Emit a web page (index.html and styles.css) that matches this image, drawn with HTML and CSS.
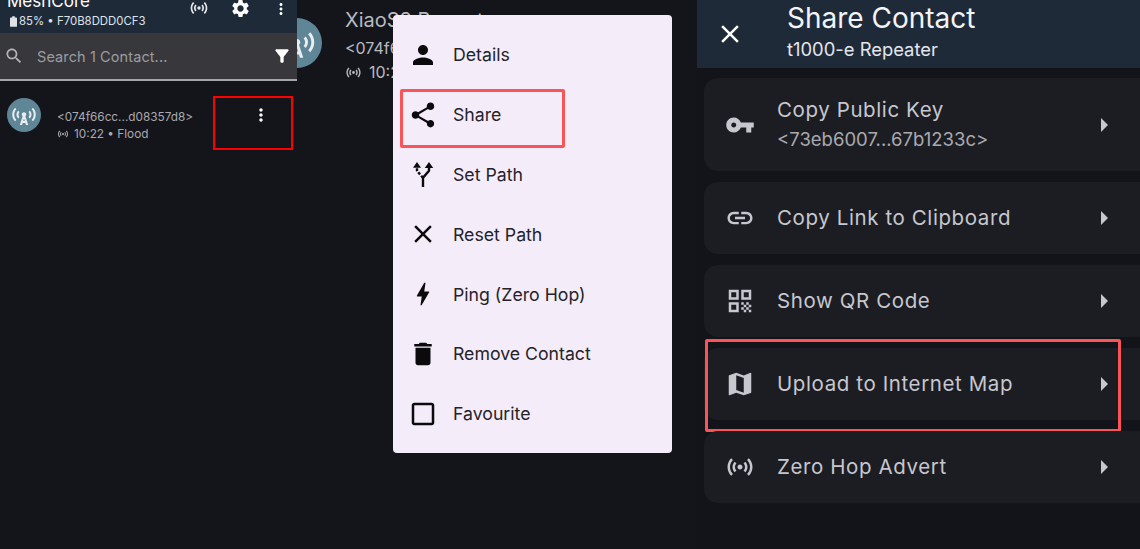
FILE: index.html
```html
<!DOCTYPE html>
<html lang="en">
<head>
  <meta charset="UTF-8" />
  <title>MeshCore Share Contact</title>
  <link rel="stylesheet" href="styles.css">
</head>
<body>
  <svg class="defs" width="0" height="0">
    <symbol id="i-advert" viewBox="0 0 24 24"><path d="M7.76 16.24C6.67 15.16 6 13.66 6 12s.67-3.16 1.76-4.24l1.42 1.42C8.45 9.9 8 10.9 8 12s.45 2.1 1.17 2.83l-1.41 1.41zm8.48 0C17.33 15.16 18 13.66 18 12s-.67-3.16-1.76-4.24l-1.42 1.42C15.55 9.9 16 10.9 16 12s-.45 2.1-1.17 2.83l1.41 1.41zM12 10c-1.1 0-2 .9-2 2s.9 2 2 2 2-.9 2-2-.9-2-2-2zm8 2c0 2.21-.9 4.21-2.35 5.65l1.42 1.42C20.88 17.26 22 14.76 22 12s-1.12-5.26-2.93-7.07l-1.42 1.42C19.1 7.79 20 9.79 20 12zM6.35 6.35L4.93 4.93C3.12 6.74 2 9.24 2 12s1.12 5.26 2.93 7.07l1.42-1.42C4.9 16.21 4 14.21 4 12s.9-4.21 2.35-5.65z"/></symbol>
    <symbol id="i-more" viewBox="0 0 24 24"><path d="M12 8c1.1 0 2-.9 2-2s-.9-2-2-2-2 .9-2 2 .9 2 2 2zm0 2c-1.1 0-2 .9-2 2s.9 2 2 2 2-.9 2-2-.9-2-2-2zm0 6c-1.1 0-2 .9-2 2s.9 2 2 2 2-.9 2-2-.9-2-2-2z"/></symbol>
    <symbol id="i-tower" viewBox="0 0 24 24"><path d="M7.3 14.7C6.5 13.9 6 12.8 6 11.6s.5-2.300 1.300-3.100l1.100 1.100C7.900 10.100 7.600 10.800 7.600 11.600s.3 1.500.8 2zm9.400 0l-1.100-1.100c.5-.5.8-1.200.8-2s-.3-1.500-.8-2l1.100-1.100c.8.8 1.300 1.900 1.300 3.100s-.5 2.300-1.300 3.100zM4.800 17C3.400 15.600 2.600 13.700 2.600 11.600S3.400 7.600 4.800 6.200l1.100 1.100C4.800 8.400 4.200 9.900 4.200 11.600s.6 3.200 1.700 4.300zm14.400 0l-1.100-1.100c1.100-1.100 1.700-2.600 1.700-4.300s-.6-3.200-1.700-4.300l1.100-1.100c1.400 1.400 2.200 3.300 2.200 5.400s-.8 4-2.200 5.400zM12 9.800c-1 0-1.800.8-1.800 1.800 0 .6.300 1.100.7 1.400L8.600 20h1.800l.5-1.700h2.200l.5 1.700h1.800L13.100 13c.4-.3.700-.8.700-1.400 0-1-.8-1.800-1.800-1.800zm-.6 6.900l.6-2 .6 2z"/></symbol>
  </svg>

  <div class="screens">
    <section class="contacts">
      <header class="app-bar">
        <div class="app-title">
          <div class="app-name">MeshCore</div>
          <div class="app-status">
            <svg class="battery" viewBox="0 0 8 12"><path d="M2.500 0h3v1.500H7a1 1 0 0 1 1 1V11a1 1 0 0 1-1 1H1a1 1 0 0 1-1-1V2.500a1 1 0 0 1 1-1h1.500z"/></svg>
            85% • F70B8DDD0CF3
          </div>
        </div>
        <svg class="bar-icon advert-icon"><use href="#i-advert"/></svg>
        <svg class="bar-icon gear-icon" viewBox="0 0 24 24"><path d="M19.140 12.940c.04-.3.060-.61.060-.94 0-.32-.02-.64-.07-.94l2.030-1.580a.49.49 0 0 0 .12-.61l-1.920-3.320a.488.488 0 0 0-.59-.22l-2.390.96c-.5-.38-1.030-.7-1.620-.94l-.36-2.540a.484.484 0 0 0-.48-.41h-3.840c-.24 0-.43.170-.47.41l-.36 2.540c-.59.24-1.130.57-1.620.94l-2.390-.96c-.22-.08-.47 0-.59.220L2.740 8.870c-.12.21-.08.47.12.610l2.030 1.580c-.05.3-.09.63-.09.94s.02.64.07.94l-2.030 1.580a.49.49 0 0 0-.12.610l1.920 3.320c.12.22.37.290.59.220l2.390-.96c.5.380 1.030.7 1.620.94l.36 2.540c.05.240.24.410.48.410h3.840c.24 0 .44-.170.47-.41l.36-2.540c.59-.24 1.130-.56 1.620-.94l2.390.96c.22.080.47 0 .59-.220l1.920-3.320c.12-.22.070-.47-.12-.610l-2.010-1.580zM12 15.600c-1.980 0-3.600-1.620-3.600-3.600s1.620-3.600 3.600-3.600 3.600 1.620 3.600 3.600-1.620 3.600-3.600 3.600z"/></svg>
        <svg class="bar-icon more-icon"><use href="#i-more"/></svg>
      </header>
      <div class="search-bar">
        <svg class="search-icon" viewBox="0 0 24 24"><path d="M15.500 14h-.79l-.28-.27C15.410 12.590 16 11.110 16 9.500 16 5.910 13.090 3 9.500 3S3 5.910 3 9.500 5.910 16 9.500 16c1.610 0 3.090-.59 4.230-1.570l.27.280v.79l5 4.990L20.490 19l-4.990-5zm-6 0C7.010 14 5 11.990 5 9.500S7.010 5 9.500 5 14 7.010 14 9.500 11.990 14 9.500 14z"/></svg>
        <span class="search-text">Search 1 Contact...</span>
        <svg class="filter-icon" viewBox="0 0 24 24"><path d="M4.250 5.610C6.270 8.200 10 13 10 13v6c0 .55.450 1 1 1h2c.55 0 1-.45 1-1v-6s3.720-4.800 5.740-7.390A.998.998 0 0 0 18.950 4H5.040c-.83 0-1.300.950-.79 1.610z"/></svg>
      </div>
      <div class="contact-row">
        <div class="avatar"><svg><use href="#i-tower"/></svg></div>
        <div class="contact-text">
          <div class="contact-key">&lt;074f66cc...d08357d8&gt;</div>
          <div class="contact-meta"><svg><use href="#i-advert"/></svg>10:22 • Flood</div>
        </div>
        <div class="mark-more"><svg><use href="#i-more"/></svg></div>
      </div>
    </section>

    <section class="contact-detail">
      <div class="detail-row">
        <div class="avatar big"><svg><use href="#i-tower"/></svg></div>
        <div class="detail-text">
          <div class="detail-name">XiaoS3 Repeater</div>
          <div class="detail-key">&lt;074f66cc...d08357d8&gt;</div>
          <div class="detail-meta"><svg><use href="#i-advert"/></svg>10:22 • Flood</div>
        </div>
      </div>
      <div class="menu">
        <div class="menu-item">
          <svg viewBox="0 0 24 24"><path d="M12 12c2.210 0 4-1.790 4-4s-1.790-4-4-4-4 1.790-4 4 1.790 4 4 4zm0 2c-2.670 0-8 1.340-8 4v2h16v-2c0-2.660-5.330-4-8-4z"/></svg>
          <span>Details</span>
        </div>
        <div class="menu-item marked">
          <svg viewBox="0 0 24 24"><path d="M18 16.080c-.76 0-1.440.3-1.960.77L8.910 12.700c.05-.23.090-.46.090-.7s-.04-.47-.09-.7l7.050-4.110c.54.5 1.250.81 2.040.81 1.660 0 3-1.340 3-3s-1.340-3-3-3-3 1.340-3 3c0 .24.040.47.090.7L8.040 9.810C7.500 9.310 6.790 9 6 9c-1.660 0-3 1.340-3 3s1.340 3 3 3c.79 0 1.500-.31 2.040-.81l7.120 4.160c-.05.21-.08.43-.08.650 0 1.610 1.310 2.920 2.920 2.920s2.920-1.310 2.920-2.920-1.310-2.920-2.920-2.920z"/></svg>
          <span>Share</span>
        </div>
        <div class="menu-item">
          <svg viewBox="0 0 24 24">
            <path class="fork-line" d="M12 22.400V15L16.800 9.500V6"/>
            <path class="fork-line dashed" d="M12 15L7.200 9.500V6.500"/>
            <path d="M16.800 2.400L20.200 7.200H13.400zM7.200 2.400L10.400 7H4z"/>
          </svg>
          <span>Set Path</span>
        </div>
        <div class="menu-item">
          <svg viewBox="0 0 24 24"><path d="M19 6.410L17.590 5 12 10.590 6.410 5 5 6.410 10.590 12 5 17.590 6.410 19 12 13.410 17.590 19 19 17.590 13.410 12z"/></svg>
          <span>Reset Path</span>
        </div>
        <div class="menu-item">
          <svg viewBox="0 0 24 24"><path d="M11 21h-1l1-7H7.500c-.88 0-.33-.75-.31-.78C8.480 10.940 10.420 7.540 13.010 3h1l-1 7h3.510c.4 0 .62.190.4.660C12.970 17.550 11 21 11 21z"/></svg>
          <span>Ping (Zero Hop)</span>
        </div>
        <div class="menu-item">
          <svg viewBox="0 0 24 24"><path d="M6 19c0 1.100.9 2 2 2h8c1.100 0 2-.9 2-2V7H6v12zM19 4h-3.500l-1-1h-5l-1 1H5v2h14V4z"/></svg>
          <span>Remove Contact</span>
        </div>
        <div class="menu-item">
          <svg viewBox="0 0 24 24"><path d="M19 5v14H5V5h14m0-2H5c-1.100 0-2 .9-2 2v14c0 1.100.9 2 2 2h14c1.100 0 2-.9 2-2V5c0-1.100-.9-2-2-2z"/></svg>
          <span>Favourite</span>
        </div>
      </div>
    </section>

    <section class="share">
      <header class="share-bar">
        <svg class="close-icon" viewBox="0 0 24 24"><path d="M19 6.410L17.590 5 12 10.590 6.410 5 5 6.410 10.590 12 5 17.590 6.410 19 12 13.410 17.590 19 19 17.590 13.410 12z"/></svg>
        <div class="share-head">
          <div class="share-title">Share Contact</div>
          <div class="share-sub">t1000-e Repeater</div>
        </div>
      </header>
      <div class="share-list">
        <div class="card tall">
          <svg class="card-icon" viewBox="0 0 24 24"><path d="M12.650 10C11.830 7.670 9.610 6 7 6c-3.310 0-6 2.690-6 6s2.690 6 6 6c2.610 0 4.830-1.670 5.650-4H17v4h4v-4h2v-4H12.650zM7 14c-1.100 0-2-.9-2-2s.9-2 2-2 2 .9 2 2-.9 2-2 2z"/></svg>
          <div class="card-text">
            <div class="card-label">Copy Public Key</div>
            <div class="card-key">&lt;73eb6007...67b1233c&gt;</div>
          </div>
          <div class="arrow"></div>
        </div>
        <div class="card">
          <svg class="card-icon" viewBox="0 0 24 24"><path d="M3.900 12c0-1.710 1.390-3.100 3.100-3.100h4V7H7c-2.760 0-5 2.240-5 5s2.240 5 5 5h4v-1.900H7c-1.710 0-3.100-1.390-3.100-3.100zM8 13h8v-2H8v2zm9-6h-4v1.900h4c1.710 0 3.100 1.390 3.100 3.100s-1.390 3.100-3.100 3.100h-4V17h4c2.760 0 5-2.240 5-5s-2.240-5-5-5z"/></svg>
          <div class="card-text"><div class="card-label">Copy Link to Clipboard</div></div>
          <div class="arrow"></div>
        </div>
        <div class="card">
          <svg class="card-icon" viewBox="0 0 24 24"><path d="M3 11h8V3H3v8zm2-6h4v4H5V5zM3 21h8v-8H3v8zm2-6h4v4H5v-4zM13 3v8h8V3h-8zm6 6h-4V5h4v4zM19 19h2v2h-2zM13 13h2v2h-2zM15 15h2v2h-2zM13 17h2v2h-2zM15 19h2v2h-2zM17 17h2v2h-2zM17 13h2v2h-2zM19 15h2v2h-2z"/></svg>
          <div class="card-text"><div class="card-label">Show QR Code</div></div>
          <div class="arrow"></div>
        </div>
        <div class="card marked-card">
          <svg class="card-icon" viewBox="0 0 24 24"><path d="M20.500 3l-.16.030L15 5.100 9 3 3.360 4.900c-.21.070-.36.250-.36.480V20.500c0 .28.220.5.500.5l.16-.03L9 18.900l6 2.100 5.640-1.900c.21-.07.36-.25.360-.48V3.500c0-.28-.22-.5-.5-.5zM15 19l-6-2.110V5l6 2.110V19z"/></svg>
          <div class="card-text"><div class="card-label">Upload to Internet Map</div></div>
          <div class="arrow"></div>
        </div>
        <div class="card">
          <svg class="card-icon"><use href="#i-advert"/></svg>
          <div class="card-text"><div class="card-label">Zero Hop Advert</div></div>
          <div class="arrow"></div>
        </div>
      </div>
    </section>
  </div>
</body>
</html>
```

FILE: styles.css
```css
html, body {
  margin: 0;
  height: 100%;
  overflow: hidden;
}
body {
  background-color: #131419;
  font-family: Inter, "Noto Sans", sans-serif;
  color: #c6c7cf;
}
.defs {
  display: none;
}
.screens {
  display: grid;
  grid-template-columns: 297px 400px 443px;
  height: 549px;
}
section {
  min-width: 0;
  height: 549px;
}

/* left screen */
.contacts {
  background-color: #14151a;
}
.app-bar {
  display: flex;
  align-items: flex-start;
  height: 33px;
  background-color: #1f2a38;
  color: #fff;
  overflow: hidden;
}
.app-title {
  flex: 1;
  padding-left: 7px;
  margin-top: -9px;
}
.app-name {
  font-size: 17px;
  line-height: 20px;
}
.app-status {
  display: flex;
  align-items: center;
  font-size: 11.400px;
  line-height: 16px;
  margin-top: 2px;
  color: #dfe2e8;
}
.battery {
  width: 7px;
  height: 11px;
  margin: 0 2px 0 3px;
  fill: #dfe2e8;
}
.bar-icon {
  fill: #e6e8ee;
}
.advert-icon {
  width: 20px;
  height: 20px;
  margin-right: 21px;
  margin-top: -2px;
}
.gear-icon {
  width: 21px;
  height: 21px;
  margin-right: 21px;
  margin-top: -2px;
  fill: #fff;
}
.more-icon {
  width: 18px;
  height: 18px;
  margin-right: 7px;
  fill: #fff;
}
.search-bar {
  display: flex;
  align-items: center;
  height: 46px;
  background-color: #38383c;
  border-bottom: 2px solid #a5a6aa;
}
.search-icon {
  width: 20px;
  height: 20px;
  margin-left: 4px;
  fill: #b4b5b9;
}
.search-text {
  flex: 1;
  margin-left: 13px;
  font-size: 14.500px;
  letter-spacing: 0.1px;
  color: #9c9da1;
}
.filter-icon {
  width: 20px;
  height: 20px;
  margin-right: 5px;
  fill: #fff;
}
.contact-row {
  display: flex;
  position: relative;
  padding: 17px 0 0 7px;
}
.avatar {
  display: flex;
  align-items: center;
  justify-content: center;
  width: 34px;
  height: 34px;
  border-radius: 50%;
  background-color: #5f8696;
  flex-shrink: 0;
}
.avatar svg {
  width: 30px;
  height: 30px;
  fill: #e9eef0;
}
.contact-text {
  margin: 11px 0 0 16px;
  font-size: 11.800px;
  color: #a9aab0;
}
.contact-key {
  line-height: 16px;
}
.contact-meta {
  display: flex;
  align-items: center;
  line-height: 16px;
  margin-top: 1px;
}
.contact-meta svg {
  width: 12px;
  height: 12px;
  margin-right: 5px;
  fill: #a9aab0;
}
.mark-more {
  position: absolute;
  left: 213px;
  top: 15px;
  width: 76px;
  height: 50px;
  border: 2px solid #f00;
  display: flex;
  justify-content: center;
}
.mark-more svg {
  width: 20px;
  height: 20px;
  margin: 7px 0 0 16px;
  fill: #fff;
}

/* middle screen */
.contact-detail {
  position: relative;
  overflow: hidden;
  background-color: #14151a;
}
.detail-row {
  display: flex;
  padding-top: 6px;
}
.avatar.big {
  width: 50px;
  height: 50px;
  margin: 12px 0 0 -25px;
}
.avatar.big svg {
  width: 44px;
  height: 44px;
}
.detail-text {
  margin-left: 23px;
  color: #b9bac0;
}
.detail-name {
  font-size: 20px;
  line-height: 28px;
  white-space: nowrap;
}
.detail-key {
  font-size: 16px;
  line-height: 24px;
  margin-top: 2px;
  white-space: nowrap;
}
.detail-meta {
  display: flex;
  align-items: center;
  font-size: 16px;
  line-height: 24px;
}
.detail-meta svg {
  width: 17px;
  height: 17px;
  margin-right: 7px;
  fill: #b9bac0;
}
.menu {
  position: absolute;
  left: 96px;
  top: 15px;
  width: 279px;
  height: 438px;
  padding-top: 10px;
  box-sizing: border-box;
  background-color: #f5ecf9;
  border-radius: 4px;
  color: #24232a;
}
.menu-item {
  display: flex;
  align-items: center;
  position: relative;
  height: 59.800px;
  padding-left: 15px;
  font-size: 17.700px;
}
.menu-item svg {
  width: 30px;
  height: 30px;
  margin-right: 15px;
  fill: #0b0b0e;
}
.fork-line {
  fill: none;
  stroke: #0b0b0e;
  stroke-width: 1.900;
}
.fork-line.dashed {
  stroke-dasharray: 2.200 1.400;
}
.menu-item.marked::after {
  content: "";
  position: absolute;
  left: 7px;
  top: 4px;
  width: 159px;
  height: 53px;
  border: 3px solid #fa5459;
  border-radius: 2px;
}

/* right screen */
.share {
  background-color: #131419;
}
.share-bar {
  display: flex;
  align-items: center;
  height: 68px;
  background-color: #1f2a38;
  color: #f2f4f8;
}
.close-icon {
  width: 30px;
  height: 30px;
  margin: 0 42px 0 18px;
  fill: #fff;
}
.share-head {
  margin-bottom: 6px;
}
.share-title {
  font-size: 28px;
  line-height: 34px;
}
.share-sub {
  margin-top: 2px;
  font-size: 18.400px;
  line-height: 24px;
  color: #e3e6ec;
}
.share-list {
  display: flex;
  flex-direction: column;
  gap: 11px;
  padding: 10px 0 0 7px;
}
.card {
  display: flex;
  align-items: center;
  position: relative;
  height: 72px;
  background-color: #1c1d22;
  border-radius: 14px 0 0 14px;
}
.card.tall {
  height: 93px;
}
.card-icon {
  width: 30px;
  height: 30px;
  margin-left: 21px;
  fill: #c6c7cf;
}
.card-text {
  flex: 1;
  margin-left: 22px;
}
.card-label {
  font-size: 20.500px;
  line-height: 28px;
  letter-spacing: 0.6px;
}
.card-key {
  margin: 3px 0 2px;
  font-size: 18.500px;
  line-height: 24px;
  color: #a9aab0;
}
.arrow {
  width: 0;
  height: 0;
  margin-right: 32px;
  border-left: 7px solid #c6c7cf;
  border-top: 7px solid transparent;
  border-bottom: 7px solid transparent;
}
.marked-card::after {
  content: "";
  position: absolute;
  left: 1px;
  top: -9px;
  width: 410px;
  height: 87px;
  border: 3px solid #fa5459;
  border-radius: 2px;
}
```
